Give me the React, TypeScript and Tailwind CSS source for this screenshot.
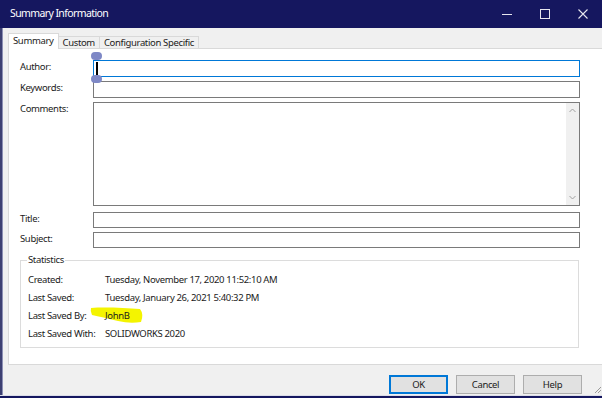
import React from "react";

const font = { fontFamily: '"Noto Sans", "Open Sans", sans-serif' };

function TitleBar() {
  return (
    <div className="h-[28px] shrink-0 bg-[#15175f] flex items-center justify-between pl-[10px] text-white">
      <span className="text-[10.5px] tracking-[-0.6px]">Summary Information</span>
      <div className="flex items-center h-full text-[#e6e6ee]">
        <div className="w-[38px] h-full flex items-center justify-center">
          <svg width="10" height="10" viewBox="0 0 10 10">
            <path d="M0 5.5h10" stroke="currentColor" strokeWidth="1" />
          </svg>
        </div>
        <div className="w-[38px] h-full flex items-center justify-center">
          <svg width="10" height="10" viewBox="0 0 10 10">
            <rect x="0.5" y="0.5" width="9" height="9" fill="none" stroke="currentColor" strokeWidth="1" />
          </svg>
        </div>
        <div className="w-[38px] h-full flex items-center justify-center">
          <svg width="10" height="10" viewBox="0 0 10 10">
            <path d="M0.5 0.5L9.5 9.5M9.5 0.5L0.5 9.5" stroke="currentColor" strokeWidth="1.1" />
          </svg>
        </div>
      </div>
    </div>
  );
}

function Field({ label, h, mt, focused }: { label: string; h: number; mt: string; focused?: boolean }) {
  return (
    <div className={`flex ${mt}`}>
      <div className="w-[73px] shrink-0 leading-[14px]">{label}</div>
      <div
        className={`w-[487px] bg-white border ${focused ? "border-[#0078d7]" : "border-[#7a7a7a]"}`}
        style={{ height: h }}
      />
    </div>
  );
}

function StatRow({ label, value, mark }: { label: string; value: string; mark?: boolean }) {
  return (
    <div className="flex items-center h-[18px]">
      <div className="w-[77px] shrink-0">{label}</div>
      <div className="relative">
        {mark && (
          <svg className="absolute left-[-15px] top-[-4px]" width="54" height="20" viewBox="0 0 54 20">
            <path d="M1 3 C15 2 35 3 50 4 Q54 9 51 17 Q40 19 28 16 Q12 12 2 10 Q0 6 1 3Z" fill="#f4f400" />
          </svg>
        )}
        <span className="relative">{value}</span>
      </div>
    </div>
  );
}

export default function App() {
  return (
    <div
      className="w-[602px] h-[398px] overflow-hidden bg-[#15175f] relative flex flex-col text-[9.5px] tracking-[-0.35px] text-[#1b1b1b]"
      style={font}
    >
      <TitleBar />
      <div className="flex-1 flex min-h-0">
        <div className="w-[3px] shrink-0 bg-[#3d4072] border-r border-[#8c8fb4]" />
        <div className="flex-1 min-w-0 overflow-hidden flex flex-col bg-[#f0f0f0] pl-[5px] pt-[5px] relative">
          {/* tabs */}
          <div className="flex items-end h-[16px]">
            <div className="relative z-10 h-[16px] px-[4px] bg-white border border-b-0 border-[#d9d9d9] flex items-center">
              Summary
            </div>
            <div className="h-[13px] px-[4px] border border-l-0 border-b-0 border-[#d9d9d9] flex items-center">
              Custom
            </div>
            <div className="h-[13px] px-[4px] border border-l-0 border-b-0 border-[#d9d9d9] flex items-center">
              Configuration Specific
            </div>
          </div>

          {/* tab page */}
          <div className="-mt-px w-[600px] h-[317px] shrink-0 bg-white border border-[#d9d9d9] pl-[11px] pt-[11px]">
            <div className="relative">
              <Field label="Author:" h={17} mt="" focused />
              {/* caret + touch handles */}
              <div className="absolute left-[71px] top-[-8px] w-[11px] h-[8px] rounded-full bg-[#7e88c6]" />
              <div className="absolute left-[76px] top-[2px] w-[2px] h-[13px] bg-black" />
              <div className="absolute left-[71px] top-[15px] w-[11px] h-[8px] rounded-full bg-[#7e88c6]" />
            </div>
            <Field label="Keywords:" h={17} mt="mt-[4px]" />
            <div className="flex mt-[4px]">
              <div className="w-[73px] shrink-0 leading-[14px]">Comments:</div>
              <div className="w-[487px] h-[104px] bg-white border border-[#7a7a7a] flex justify-end">
                <div className="w-[13px] h-full bg-[#f0f0f0] flex flex-col justify-between items-center py-[5px] text-[#a0a0a0]">
                  <svg width="7" height="5" viewBox="0 0 7 5">
                    <path d="M0.5 4L3.5 1L6.5 4" fill="none" stroke="currentColor" strokeWidth="1" />
                  </svg>
                  <svg width="7" height="5" viewBox="0 0 7 5">
                    <path d="M0.5 1L3.5 4L6.5 1" fill="none" stroke="currentColor" strokeWidth="1" />
                  </svg>
                </div>
              </div>
            </div>
            <Field label="Title:" h={16} mt="mt-[6px]" />
            <Field label="Subject:" h={16} mt="mt-[4px]" />

            <fieldset className="mt-[5px] w-[559px] h-[95px] border border-[#dcdcdc] pl-[7px]">
              <legend className="-ml-[1px] px-[1px] leading-[14px]">Statistics</legend>
              <div className="mt-[4px]">
                <StatRow label="Created:" value="Tuesday, November 17, 2020 11:52:10 AM" />
                <StatRow label="Last Saved:" value="Tuesday, January 26, 2021 5:40:32 PM" />
                <StatRow label="Last Saved By:" value="JohnB" mark />
                <StatRow label="Last Saved With:" value="SOLIDWORKS 2020" />
              </div>
            </fieldset>
          </div>

          {/* buttons */}
          <div className="flex justify-end gap-[8px] pr-[20px] pt-[10px]">
            <button className="w-[59px] h-[19px] bg-[#e1e1e1] border-2 border-[#0078d7] leading-none">
              OK
            </button>
            <button className="w-[59px] h-[19px] bg-[#e1e1e1] border border-[#adadad] leading-none">
              Cancel
            </button>
            <button className="w-[59px] h-[19px] bg-[#e1e1e1] border border-[#adadad] leading-none">
              Help
            </button>
          </div>

          {/* size grip */}
          <svg className="absolute right-0 bottom-[1px]" width="10" height="10" viewBox="0 0 10 10">
            <path d="M9 3L3 9M9 6L6 9" stroke="#9a9a9a" strokeWidth="1" />
          </svg>
        </div>
      </div>
      <div className="h-px shrink-0 bg-[#dcdde8]" />
      <div className="h-[2px] shrink-0 bg-[#15175f]" />
    </div>
  );
}
